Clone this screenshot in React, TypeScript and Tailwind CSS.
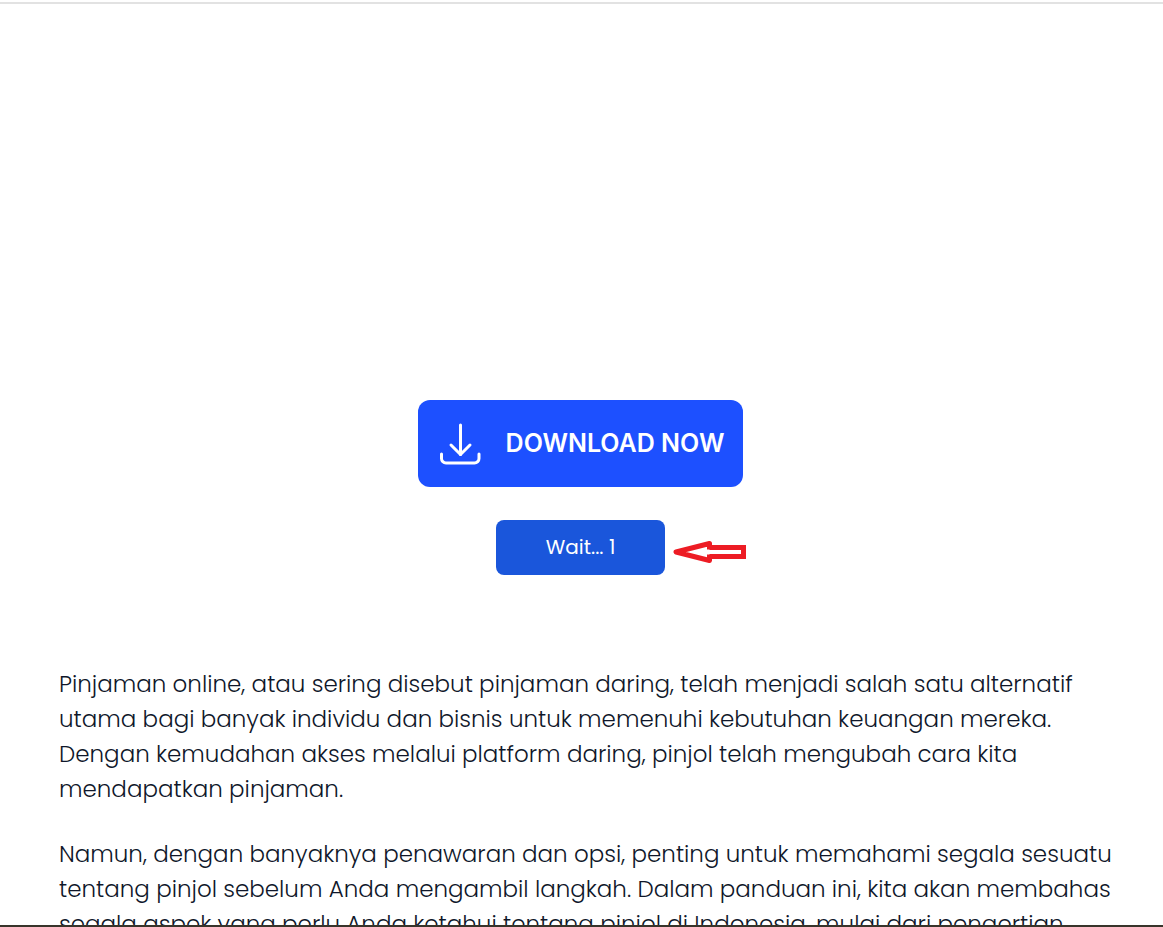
const paragraphs = [
  [
    "Pinjaman online, atau sering disebut pinjaman daring, telah menjadi salah satu alternatif",
    "utama bagi banyak individu dan bisnis untuk memenuhi kebutuhan keuangan mereka.",
    "Dengan kemudahan akses melalui platform daring, pinjol telah mengubah cara kita",
    "mendapatkan pinjaman.",
  ],
  [
    "Namun, dengan banyaknya penawaran dan opsi, penting untuk memahami segala sesuatu",
    "tentang pinjol sebelum Anda mengambil langkah. Dalam panduan ini, kita akan membahas",
    "segala aspek yang perlu Anda ketahui tentang pinjol di Indonesia, mulai dari pengertian",
  ],
];

const DownloadIcon = () => (
  <svg
    className="w-[42px] h-[42px] shrink-0"
    viewBox="0 0 42 42"
    fill="none"
    stroke="currentColor"
    strokeWidth="3"
    strokeLinecap="round"
    strokeLinejoin="round"
    aria-hidden="true"
  >
    <path d="M21.5 2v29.5" />
    <path d="M12 22l9.5 9.5 9.5-9.5" />
    <path d="M2.5 31v4.5a4.5 4.5 0 0 0 4.5 4.5h28.5a4.5 4.5 0 0 0 4.5-4.5V31" />
  </svg>
);

const PointerArrow = () => (
  <svg
    className="absolute left-full top-5 ml-2 w-[74px] h-6"
    viewBox="0 0 74 24"
    fill="none"
    stroke="#ed1c24"
    strokeWidth="5"
    aria-hidden="true"
  >
    <path d="M36.5 7.5h34v9h-34" />
    <path strokeLinejoin="round" d="M36.5 9.5v-6L3 12l33.5 8.5v-6" />
  </svg>
);

export default function App() {
  return (
    <div className="flex h-screen flex-col overflow-hidden border-b-2 border-[#38342b] bg-white pt-0.5 font-['Poppins','Inter',sans-serif] text-[#0f172a]">
      <header className="shrink-0 border-t-2 border-[#e2e2e2]" />
      <main className="min-h-0 flex-1 overflow-hidden pt-[396px]">
        <div className="flex flex-col items-center gap-[33px] pr-0.5">
          <button
            type="button"
            className="flex h-[87px] items-center gap-[25px] rounded-xl bg-[#1d50ff] pl-[21px] pr-[19px] font-['Inter',sans-serif] text-[25px] font-semibold text-white"
          >
            <DownloadIcon />
            DOWNLOAD NOW
          </button>
          <div className="relative">
            <button
              type="button"
              className="h-[55px] w-[169px] rounded-lg bg-[#1a56db] pb-0.5 text-xl text-white"
            >
              Wait... 1
            </button>
            <PointerArrow />
          </div>
        </div>

        <article className="mt-[92px] space-y-[30px] pl-[59px] pr-10 text-[23px] font-light leading-[35px]">
          {paragraphs.map((lines) => (
            <p key={lines[0]} className="whitespace-pre-line">
              {lines.join("\n")}
            </p>
          ))}
        </article>
      </main>
    </div>
  );
}
